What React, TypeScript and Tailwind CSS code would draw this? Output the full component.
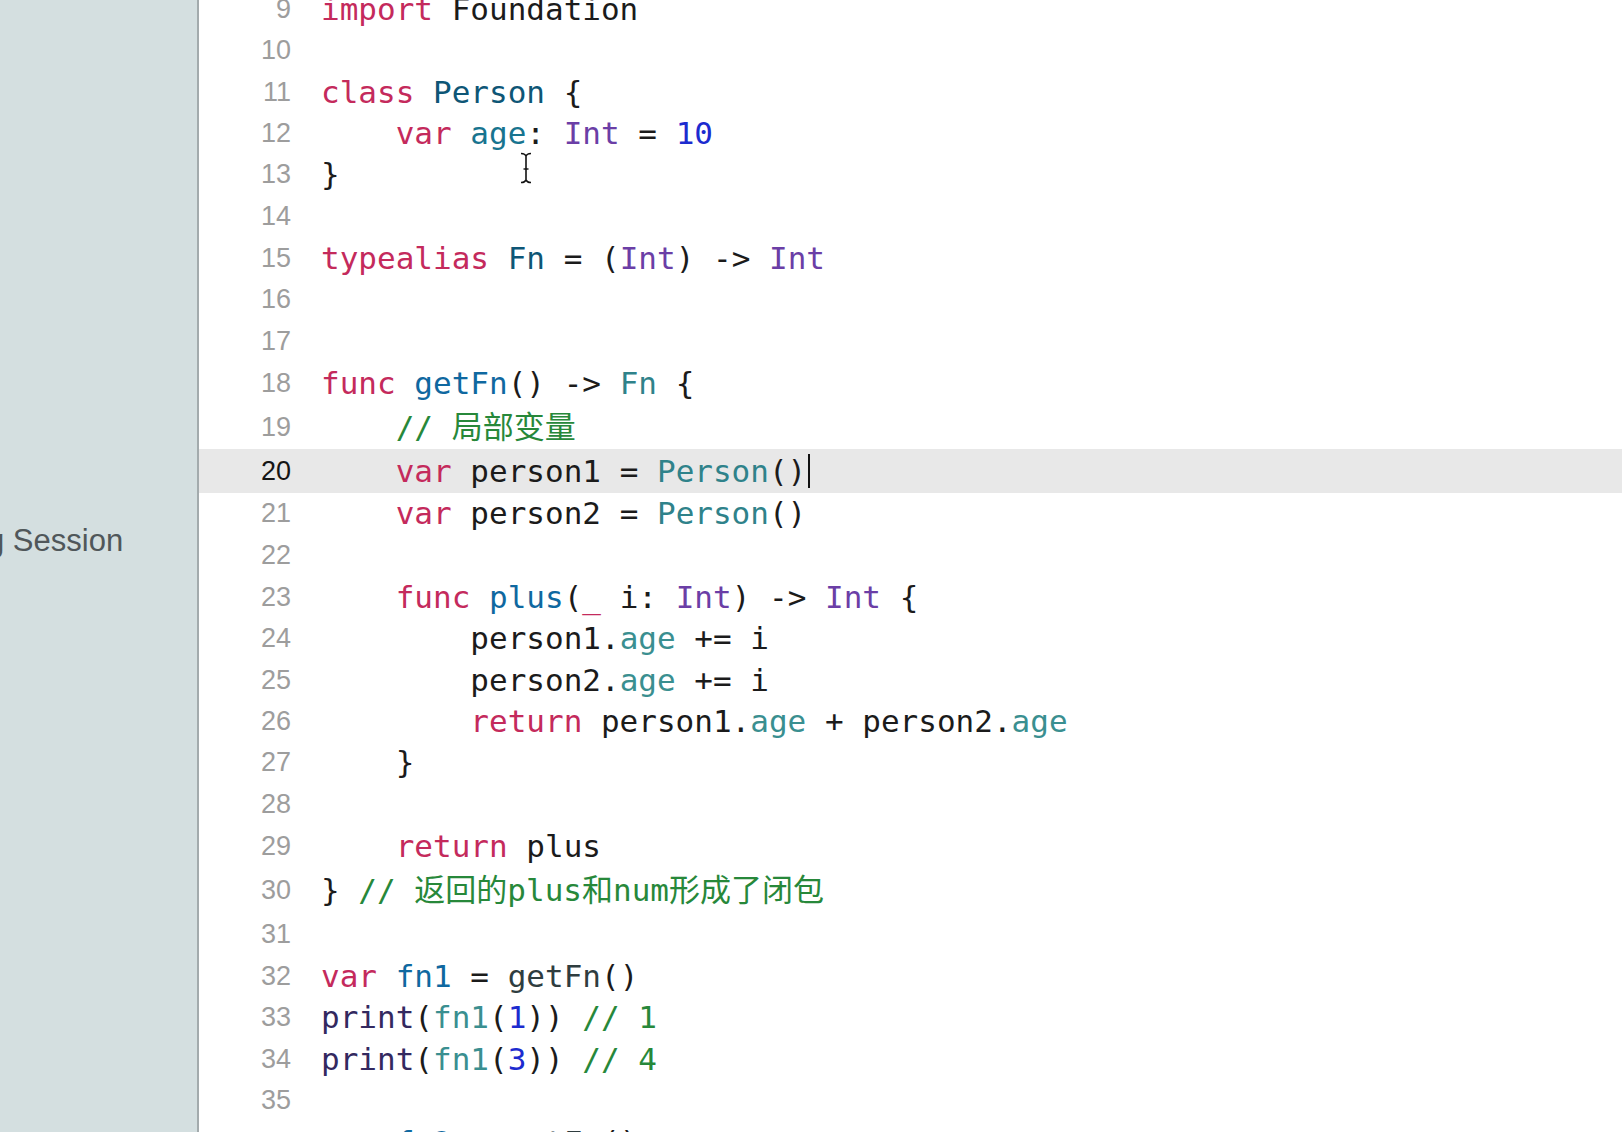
import React from "react"

type Tok = [string, string?]
type Line = { n: number; h: string; toks: Tok[]; active?: boolean }

// syntax colours, roughly Xcode light
const K = "text-[#c42a5c]" // keywords
const TD = "text-[#0e5676]" // type declarations
const DC = "text-[#18748f]" // other declarations
const FD = "text-[#0f68a0]" // function declarations
const TY = "text-[#6b3ea6]" // system types
const NUM = "text-[#1c2bcf]"
const PT = "text-[#2f828a]" // project types
const PM = "text-[#3a8f90]" // project members
const PF = "text-[#2f3d3f]" // project functions
const SF = "text-[#33295f]" // system functions
const CM = "text-[#27883a]" // comments

const lines: Line[] = [
    { n: 9, h: "h-[42px]", toks: [["import", K], [" Foundation"]] },
    { n: 10, h: "h-[41px]", toks: [] },
    { n: 11, h: "h-[42px]", toks: [["class", K], [" "], ["Person", TD], [" {"]] },
    { n: 12, h: "h-[41px]", toks: [["    "], ["var", K], [" "], ["age", DC], [": "], ["Int", TY], [" = "], ["10", NUM]] },
    { n: 13, h: "h-[41px]", toks: [["}"]] },
    { n: 14, h: "h-[42px]", toks: [] },
    { n: 15, h: "h-[42px]", toks: [["typealias", K], [" "], ["Fn", TD], [" = ("], ["Int", TY], [") -> "], ["Int", TY]] },
    { n: 16, h: "h-[41px]", toks: [] },
    { n: 17, h: "h-[42px]", toks: [] },
    { n: 18, h: "h-[43px]", toks: [["func", K], [" "], ["getFn", FD], ["() -> "], ["Fn", PT], [" {"]] },
    { n: 19, h: "h-[44px]", toks: [["    "], ["// 局部变量", CM]] },
    { n: 20, h: "h-[44px]", active: true, toks: [["    "], ["var", K], [" person1 = "], ["Person", PT], ["()"]] },
    { n: 21, h: "h-[41px]", toks: [["    "], ["var", K], [" person2 = "], ["Person", PT], ["()"]] },
    { n: 22, h: "h-[42px]", toks: [] },
    { n: 23, h: "h-[42px]", toks: [["    "], ["func", K], [" "], ["plus", FD], ["("], ["_", K], [" i: "], ["Int", TY], [") -> "], ["Int", TY], [" {"]] },
    { n: 24, h: "h-[41px]", toks: [["        person1."], ["age", PM], [" += i"]] },
    { n: 25, h: "h-[42px]", toks: [["        person2."], ["age", PM], [" += i"]] },
    { n: 26, h: "h-[41px]", toks: [["        "], ["return", K], [" person1."], ["age", PM], [" + person2."], ["age", PM]] },
    { n: 27, h: "h-[41px]", toks: [["    }"]] },
    { n: 28, h: "h-[42px]", toks: [] },
    { n: 29, h: "h-[43px]", toks: [["    "], ["return", K], [" plus"]] },
    { n: 30, h: "h-[45px]", toks: [["} "], ["// 返回的plus和num形成了闭包", CM]] },
    { n: 31, h: "h-[43px]", toks: [] },
    { n: 32, h: "h-[41px]", toks: [["var", K], [" "], ["fn1", FD], [" = "], ["getFn", PF], ["()"]] },
    { n: 33, h: "h-[41px]", toks: [["print", SF], ["("], ["fn1", PM], ["("], ["1", NUM], [")) "], ["// 1", CM]] },
    { n: 34, h: "h-[42px]", toks: [["print", SF], ["("], ["fn1", PM], ["("], ["3", NUM], [")) "], ["// 4", CM]] },
    { n: 35, h: "h-[41px]", toks: [] },
    { n: 36, h: "h-[42px]", toks: [["var", K], [" "], ["fn2", FD], [" = "], ["getFn", PF], ["()"]] },
]

function IBeam() {
    return (
        <svg width="14" height="32" viewBox="0 0 14 32" className="absolute left-[320px] top-[152px]">
            <path d="M2 1.5 C5 1.5 6.5 2.5 7 4.5 C7.5 2.5 9 1.5 12 1.5" fill="none" stroke="#111" strokeWidth="1.6" />
            <path d="M7 4.5 V27.5" stroke="#111" strokeWidth="1.6" />
            <path d="M4.5 17 H9.5" stroke="#111" strokeWidth="1.4" />
            <path d="M2 30.5 C5 30.5 6.5 29.5 7 27.5 C7.5 29.5 9 30.5 12 30.5" fill="none" stroke="#111" strokeWidth="1.6" />
        </svg>
    )
}

export default function App() {
    return (
        <div className="flex h-[1132px] w-full overflow-hidden bg-white">

            {/* Navigator, mostly cut off */}
            <div className="w-[199px] shrink-0 overflow-hidden bg-[#d4dfe0] border-r-[2px] border-[#a3abad] flex flex-col">
                <div className="mt-[521px] ml-[-13px] whitespace-nowrap text-[31px] leading-[40px] text-[#50575a] font-['Liberation_Sans',sans-serif]">
                    g Session
                </div>
            </div>

            {/* Editor */}
            <div className="relative flex-1 overflow-hidden">
                <div className="mt-[-12px] flex flex-col">
                    {lines.map((line) => (
                        <div
                            key={line.n}
                            className={`${line.h} flex items-center shrink-0 ${line.active ? "bg-[#e8e8e8]" : ""}`}
                        >
                            <div
                                className={`w-[92px] shrink-0 text-right text-[27px] font-['Liberation_Sans',sans-serif] ${line.active ? "text-[#151515]" : "text-[#9d9d9d]"}`}
                            >
                                {line.n}
                            </div>
                            <div className="ml-[30px] flex items-center whitespace-pre text-[31px] text-[#1b1b1b] font-['DejaVu_Sans_Mono','Noto_Sans_CJK_SC',monospace]">
                                {line.toks.map((t, i) => (
                                    <span key={i} className={t[1] ?? ""}>{t[0]}</span>
                                ))}
                                {line.active && <span className="ml-[2px] inline-block h-[34px] w-[2px] bg-[#111]" />}
                            </div>
                        </div>
                    ))}
                </div>

                <IBeam />
            </div>
        </div>
    )
}
